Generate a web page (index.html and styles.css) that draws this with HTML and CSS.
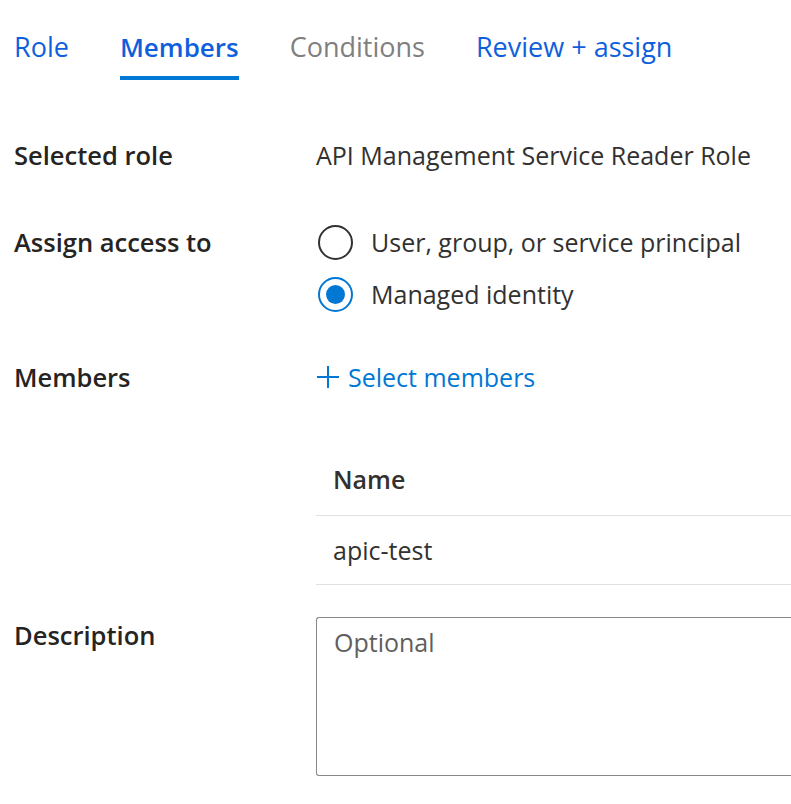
FILE: index.html
```html
<!DOCTYPE html>
<html lang="en">
<head>
<meta charset="utf-8">
<title>Add role assignment</title>
<link rel="stylesheet" href="styles.css">
</head>
<body>
<nav class="tabs">
  <span class="tab link">Role</span>
  <span class="tab link active">Members</span>
  <span class="tab disabled">Conditions</span>
  <span class="tab link">Review + assign</span>
</nav>
<section class="form">
  <div class="label row-role">Selected role</div>
  <div class="value row-role">API Management Service Reader Role</div>

  <div class="label row-assign">Assign access to</div>
  <div class="value row-assign radios">
    <label class="radio"><span class="circle"></span>User, group, or service principal</label>
    <label class="radio"><span class="circle checked"></span>Managed identity</label>
  </div>

  <div class="label row-members">Members</div>
  <div class="value row-members">
    <div class="select-link"><svg class="plus" width="24" height="24" viewBox="0 0 24 24"><path d="M12 1v22M1 12h22" stroke="#0078d4" stroke-width="2" fill="none"/></svg>Select members</div>
    <div class="table">
      <div class="th">Name</div>
      <div class="td">apic-test</div>
    </div>
  </div>

  <div class="label row-desc">Description</div>
  <div class="value row-desc">
    <div class="textarea"><span class="placeholder">Optional</span></div>
  </div>
</section>
</body>
</html>
```

FILE: styles.css
```css
html, body {
  margin: 0;
  padding: 0;
  overflow: hidden;
  background: #ffffff;
}
body {
  font-family: "Open Sans", "Noto Sans", sans-serif;
  font-size: 25px;
  line-height: 36px;
  color: #323130;
  padding-left: 14px;
}
.tabs {
  display: flex;
  gap: 51px;
  padding-top: 29px;
}
.tab {
  padding-bottom: 11px;
  border-bottom: 4px solid transparent;
  white-space: nowrap;
  font-size: 27px;
}
.tab.link { color: #0f5fdc; }
.tab.active {
  font-weight: 600;
  font-size: 26px;
  border-bottom-color: #0078d4;
}
.tab.disabled { color: #7f7f7f; }

.form {
  display: grid;
  grid-template-columns: 302px 475px;
  margin-top: 57px;
}
.label {
  font-weight: 600;
  font-size: 25.5px;
  color: #252423;
}
.value {
  color: #323130;
  white-space: nowrap;
}
.row-assign { margin-top: 51px; }
.row-members { margin-top: 47px; }
.row-desc { margin-top: 32px; }

.radios {
  display: flex;
  flex-direction: column;
  gap: 16px;
}
.radio {
  display: flex;
  align-items: center;
  gap: 18px;
  margin-left: 2px;
}
.circle {
  width: 35px;
  height: 35px;
  border: 2px solid #323130;
  border-radius: 50%;
  box-sizing: border-box;
  display: flex;
  align-items: center;
  justify-content: center;
  flex: none;
}
.circle.checked { border-color: #0078d4; }
.circle.checked::after {
  content: "";
  width: 19px;
  height: 19px;
  border-radius: 50%;
  background: #0078d4;
}

.select-link {
  display: flex;
  align-items: center;
  gap: 8px;
  color: #0078d4;
}
.plus { flex: none; }

.table { margin-top: 49px; margin-right: -20px; }
.th {
  font-weight: 600;
  padding: 17px 17px 18px;
  border-bottom: 1px solid #e1dfdd;
}
.td {
  padding: 16px 17px;
  border-bottom: 1px solid #e1dfdd;
}
.textarea {
  height: 159px;
  box-sizing: border-box;
  border: 1px solid #8a8886;
  border-right: none;
  border-radius: 3px 0 0 3px;
  padding: 6px 17px;
}
.placeholder { color: #605e5c; }
```
